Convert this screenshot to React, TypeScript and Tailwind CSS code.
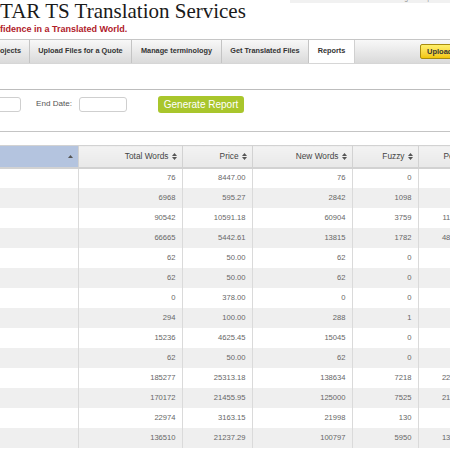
import React from "react";

const rows: string[][] = [
  ["76", "8447.00", "76", "0", "0"],
  ["6968", "595.27", "2842", "1098", "412"],
  ["90542", "10591.18", "60904", "3759", "11870"],
  ["66665", "5442.61", "13815", "1782", "48210"],
  ["62", "50.00", "62", "0", "0"],
  ["62", "50.00", "62", "0", "0"],
  ["0", "378.00", "0", "0", "0"],
  ["294", "100.00", "288", "1", "5"],
  ["15236", "4625.45", "15045", "0", "191"],
  ["62", "50.00", "62", "0", "0"],
  ["185277", "25313.18", "138634", "7218", "22416"],
  ["170172", "21455.95", "125000", "7525", "21647"],
  ["22974", "3163.15", "21998", "130", "846"],
  ["136510", "21237.29", "100797", "5950", "13562"],
];

function SortIcon() {
  return (
    <svg width="5" height="7" viewBox="0 0 5 7" className="inline-block ml-[3px] align-[-0.5px]">
      <path d="M0 3 L2.5 0 L5 3 Z" fill="#555" />
      <path d="M0 4 L2.5 7 L5 4 Z" fill="#555" />
    </svg>
  );
}

const headers = ["Total Words", "Price", "New Words", "Fuzzy"];

export default function App() {
  return (
    <div
      className="w-[450px] h-[450px] overflow-hidden bg-white relative"
      style={{ fontFamily: '"Liberation Sans", Arial, sans-serif' }}
    >
      {/* top right stub */}
      <div className="absolute top-0 left-[290px] w-[160px] h-[3px] bg-[#f1f1f1]" />
      <div className="absolute top-[-6px] left-[398px] text-[7px] leading-[8px] text-[#999]">Sign Out | Home</div>

      {/* Title */}
      <div
        className="mt-[1px] h-[21px] leading-[21px] text-[21px] text-[#1a1a1a] whitespace-nowrap"
        style={{ fontFamily: '"Liberation Serif", "Times New Roman", serif' }}
      >
        TAR TS Translation Services
      </div>
      <div className="mt-[2px] h-[11px] leading-[11px] text-[9px] font-bold text-[#b0202a] whitespace-nowrap">
        fidence in a Translated World.
      </div>

      {/* Nav */}
      <div className="mt-[4px] h-[25px] flex border-t border-b border-t-[#c6c6c6] border-b-[#d6d6d6] bg-gradient-to-b from-[#f8f8f8] to-[#dadada] text-[7.3px] font-bold text-[#333] whitespace-nowrap">
        <div className="w-[30px] flex items-center border-r border-[#c4c4c4]">ojects</div>
        <div className="w-[102px] flex items-center justify-center border-r border-[#c4c4c4]">Upload Files for a Quote</div>
        <div className="w-[90px] flex items-center justify-center border-r border-[#c4c4c4]">Manage terminology</div>
        <div className="w-[87px] flex items-center justify-center border-r border-[#c4c4c4]">Get Translated Files</div>
        <div className="w-[46px] flex items-center justify-center bg-white border-r border-[#d0d0d0]">Reports</div>
        <div className="flex-1 flex items-center justify-end">
          <div className="w-[40px] h-[15px] -mr-[10px] flex items-center pl-[6px] rounded-[2px] border border-[#a88c10] bg-gradient-to-b from-[#fff06a] to-[#f2c600] text-[7.5px] text-[#333]">
            Upload
          </div>
        </div>
      </div>

      {/* Form */}
      <div className="mt-[25px] border-t border-[#bdbdbd]" />
      <div className="pt-[6px] h-[17px] box-content flex items-center text-[8.1px] text-[#555] whitespace-nowrap">
        <div className="-ml-[20px] w-[41px] h-[15px] rounded-[3px] border border-[#cfcfcf] bg-white" />
        <div className="ml-[15px]">End Date:</div>
        <div className="ml-[7px] w-[48px] h-[15px] rounded-[3px] border border-[#cfcfcf] bg-white" />
        <div className="ml-[31px] w-[86px] h-[17px] rounded-[3px] bg-[#a9c62c] text-white text-[10px] flex items-center justify-center">
          Generate Report
        </div>
      </div>
      <div className="mt-[18px] border-t border-[#c4c4c4]" />

      {/* Table */}
      <table className="mt-[13px] w-[478px] table-fixed border-collapse whitespace-nowrap">
        <colgroup>
          <col className="w-[78px]" />
          <col className="w-[104px]" />
          <col className="w-[70px]" />
          <col className="w-[100px]" />
          <col className="w-[66px]" />
          <col className="w-[60px]" />
        </colgroup>
        <thead>
          <tr className="h-[22px] text-[8.3px] text-[#444]">
            <th className="bg-[#b4c4df] border-t border-b-2 border-[#d2d2d2] text-right pr-[5px] font-normal">
              <svg width="5" height="3" viewBox="0 0 5 3" className="inline-block align-middle">
                <path d="M0 3 L2.5 0 L5 3 Z" fill="#555" />
              </svg>
            </th>
            {headers.map((h) => (
              <th
                key={h}
                className="bg-gradient-to-b from-[#f3f3f3] to-[#e8e8e8] border-t border-b-2 border-l border-[#d2d2d2] text-right pr-[5px] font-normal"
              >
                {h}
                <SortIcon />
              </th>
            ))}
            <th className="bg-gradient-to-b from-[#f3f3f3] to-[#e8e8e8] border-t border-b-2 border-l border-[#d2d2d2] text-left pl-[25px] font-normal">
              Perfect
              <SortIcon />
            </th>
          </tr>
        </thead>
        <tbody>
          {rows.map((r, i) => (
            <tr key={i} className={`h-[20px] text-[7.6px] text-[#666] ${i % 2 === 1 ? "bg-[#efefef]" : "bg-white"}`}>
              <td />
              {r.map((v, j) => (
                <td
                  key={j}
                  className={`border-l border-[#dadada] text-right ${j === 4 ? "pr-[15px]" : "pr-[6px]"}`}
                >
                  {v}
                </td>
              ))}
            </tr>
          ))}
        </tbody>
      </table>
    </div>
  );
}
